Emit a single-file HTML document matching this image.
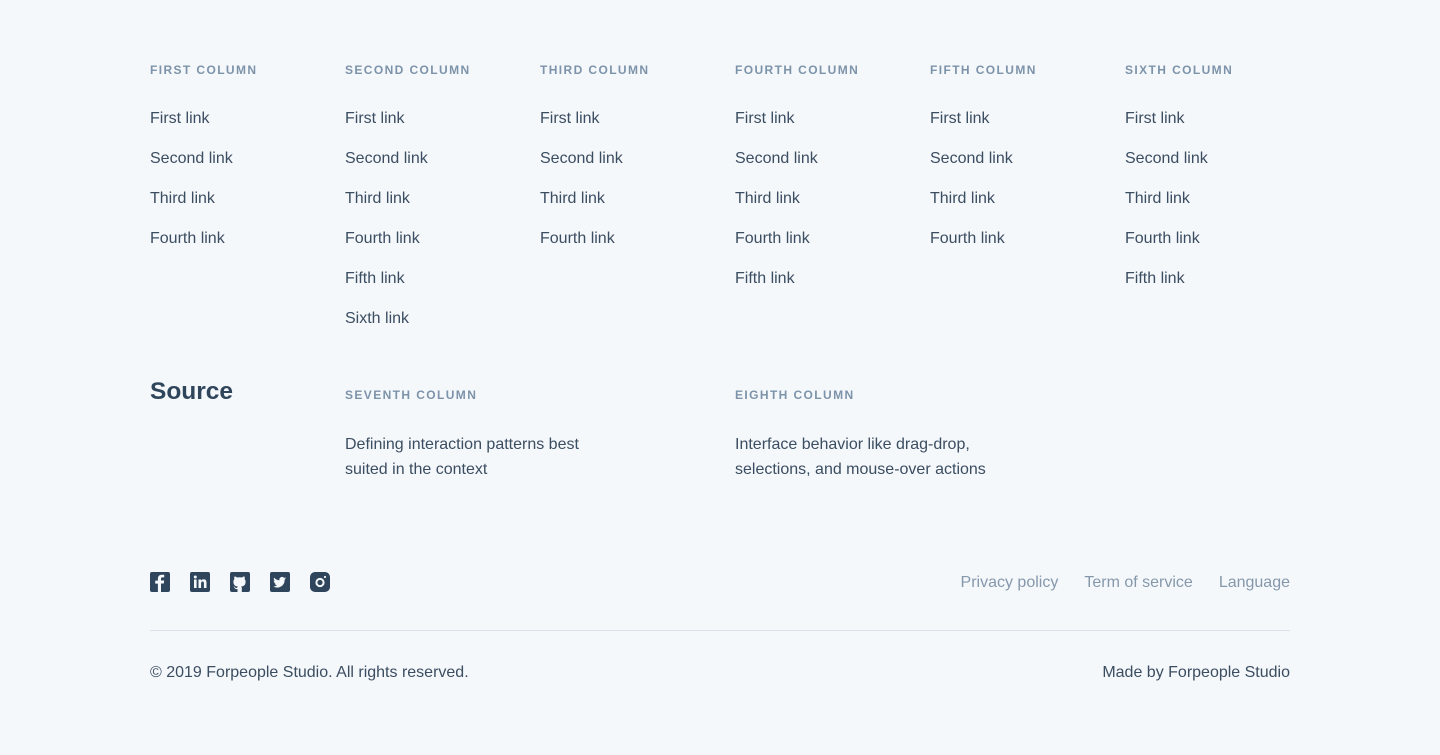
<!DOCTYPE html>
<html><head><meta charset="utf-8"><style>
*{margin:0;padding:0;box-sizing:border-box}
body{width:1440px;height:755px;background:#f5f8fb;font-family:"Liberation Sans",sans-serif;position:relative;overflow:hidden;color:#3b4d61}
.col{position:absolute;top:62px}
.h{font-size:12px;font-weight:bold;letter-spacing:1.4px;color:#7c93aa;height:16px;line-height:16px;white-space:nowrap}
.l{font-size:16px;line-height:40px;white-space:nowrap}
.col .links{margin-top:21px}
.p{font-size:16px;line-height:25px;color:#3b4d61}
.ic{position:absolute;top:572px;width:20px;height:20px;background:#2f455c;border-radius:2px}
.ic svg{width:20px;height:20px;display:block}
</style></head><body>
<div class="col" style="left:150px"><div class="h">FIRST COLUMN</div><div class="links l">First link<br>Second link<br>Third link<br>Fourth link</div></div>
<div class="col" style="left:345px"><div class="h">SECOND COLUMN</div><div class="links l">First link<br>Second link<br>Third link<br>Fourth link<br>Fifth link<br>Sixth link</div></div>
<div class="col" style="left:540px"><div class="h">THIRD COLUMN</div><div class="links l">First link<br>Second link<br>Third link<br>Fourth link</div></div>
<div class="col" style="left:735px"><div class="h">FOURTH COLUMN</div><div class="links l">First link<br>Second link<br>Third link<br>Fourth link<br>Fifth link</div></div>
<div class="col" style="left:930px"><div class="h">FIFTH COLUMN</div><div class="links l">First link<br>Second link<br>Third link<br>Fourth link</div></div>
<div class="col" style="left:1125px"><div class="h">SIXTH COLUMN</div><div class="links l">First link<br>Second link<br>Third link<br>Fourth link<br>Fifth link</div></div>

<div style="position:absolute;left:150px;top:378px;font-size:24.5px;font-weight:bold;color:#2f455c">Source</div>
<div class="col" style="left:345px;top:387px"><div class="h">SEVENTH COLUMN</div><div class="p" style="margin-top:29px">Defining interaction patterns best<br>suited in the context</div></div>
<div class="col" style="left:735px;top:387px"><div class="h">EIGHTH COLUMN</div><div class="p" style="margin-top:29px">Interface behavior like drag-drop,<br>selections, and mouse-over actions</div></div>

<div class="ic" style="left:150px"><svg viewBox="0 0 20 20"><path d="M11 20V11.5h2.8l.4-3H11V6.8c0-.9.3-1.4 1.5-1.4h1.7V2.8c-.3 0-1.3-.1-2.4-.1-2.4 0-3.9 1.4-3.9 4v1.9H5.2v3h2.7V20z" fill="#f5f8fb"/></svg></div>
<div class="ic" style="left:190px"><svg viewBox="0 0 20 20"><rect x="4" y="7.5" width="2.6" height="8.5" fill="#f5f8fb"/><circle cx="5.3" cy="5" r="1.5" fill="#f5f8fb"/><path d="M8.5 7.5h2.5v1.2c.5-.9 1.5-1.4 2.7-1.4 2.2 0 2.8 1.4 2.8 3.4V16h-2.6v-4.7c0-1-.2-1.8-1.3-1.8s-1.5.8-1.5 1.8V16H8.5z" fill="#f5f8fb"/></svg></div>
<div class="ic" style="left:230px"><svg viewBox="0 0 20 20"><path d="M7.5 20v-3c-2.5.5-3-1-3.2-1.6-.2-.4-.6-.9-1-1 .4-.3 1.1.2 1.5.8.5.7 1.5.9 2.4.5.1-.6.4-1 .7-1.2-2.300-.3-4.5-1.1-4.5-4.8 0-1.1.4-1.9 1-2.6-.1-.3-.4-1.3.1-2.6 0 0 .8-.3 2.6 1 .8-.2 1.6-.3 2.4-.3s1.6.1 2.4.3c1.8-1.3 2.6-1 2.6-1 .5 1.3.2 2.3.1 2.6.6.7 1 1.5 1 2.6 0 3.7-2.2 4.5-4.5 4.8.4.3.7.9.7 1.7V20z" fill="#f5f8fb"/></svg></div>
<div class="ic" style="left:270px"><svg viewBox="0 0 20 20"><path d="M16 6.3c-.5.2-1 .4-1.5.4.6-.3 1-.8 1.2-1.4-.5.3-1.1.5-1.7.6a2.6 2.6 0 0 0-4.5 2.4C7.3 8.2 5.4 7.2 4.1 5.6c-.7 1.2-.3 2.7.8 3.5-.4 0-.8-.1-1.2-.3 0 1.3.9 2.4 2.1 2.6-.4.1-.8.1-1.2 0 .3 1 1.3 1.8 2.4 1.8A5.3 5.3 0 0 1 3.2 14.3 7.4 7.4 0 0 0 14.6 7.7c.5-.4 1-.8 1.4-1.4z" fill="#f5f8fb"/></svg></div>
<div class="ic" style="left:310px;border-radius:5px"><svg viewBox="0 0 20 20"><circle cx="10" cy="10.5" r="3.6" fill="none" stroke="#f5f8fb" stroke-width="2"/><circle cx="15" cy="5" r="1.1" fill="#f5f8fb"/></svg></div>

<div style="position:absolute;right:150px;top:574px;font-size:16px;color:#8598ab">
<span>Privacy policy</span><span style="margin-left:26px">Term of service</span><span style="margin-left:26px">Language</span></div>
<div style="position:absolute;left:150px;width:1140px;top:630px;height:1px;background:#dbe2e9"></div>
<div style="position:absolute;left:150px;top:664px;font-size:16px">© 2019 Forpeople Studio. All rights reserved.</div>
<div style="position:absolute;right:150px;top:664px;font-size:16px">Made by Forpeople Studio</div>
</body></html>
